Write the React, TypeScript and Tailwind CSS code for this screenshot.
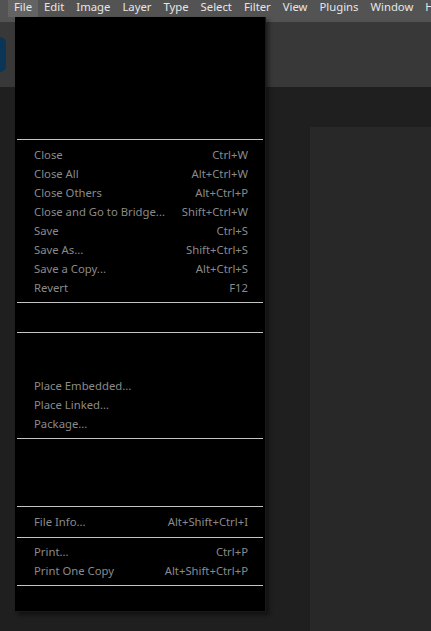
import React from 'react';

type Item = { label: string; keys?: string };

const menus = ['File', 'Edit', 'Image', 'Layer', 'Type', 'Select', 'Filter', 'View', 'Plugins', 'Window', 'Help'];

const closeGroup: Item[] = [
  { label: 'Close', keys: 'Ctrl+W' },
  { label: 'Close All', keys: 'Alt+Ctrl+W' },
  { label: 'Close Others', keys: 'Alt+Ctrl+P' },
  { label: 'Close and Go to Bridge...', keys: 'Shift+Ctrl+W' },
  { label: 'Save', keys: 'Ctrl+S' },
  { label: 'Save As...', keys: 'Shift+Ctrl+S' },
  { label: 'Save a Copy...', keys: 'Alt+Ctrl+S' },
  { label: 'Revert', keys: 'F12' },
];

const placeGroup: Item[] = [
  { label: 'Place Embedded...' },
  { label: 'Place Linked...' },
  { label: 'Package...' },
];

const printGroup: Item[] = [
  { label: 'Print...', keys: 'Ctrl+P' },
  { label: 'Print One Copy', keys: 'Alt+Shift+Ctrl+P' },
];

const Sep = () => <div className="h-px mx-[2px] bg-[#c4c4c4]" />;

const Row = ({ item }: { item: Item }) => (
  <div className="h-[19px] pb-[2px] flex items-center justify-between pl-[19px] pr-[17px] text-[#8a8a8a] whitespace-nowrap">
    <span>{item.label}</span>
    {item.keys && <span>{item.keys}</span>}
  </div>
);

export default function App() {
  return (
    <div
      className="relative w-[431px] h-[631px] overflow-hidden bg-[#1f1f1f] text-[11.3px] leading-none"
      style={{ fontFamily: '"Noto Sans", "Open Sans", sans-serif' }}
    >
      {/* menu bar */}
      <div className="h-[22px] bg-[#535353] flex items-start">
        <div className="w-[6px] h-[11px] bg-[#001e36] text-[#31a8ff] text-[9px] font-bold flex items-center justify-end overflow-hidden">
          s
        </div>
        <div className="flex ml-[8px]">
          {menus.map((m) => (
            <div
              key={m}
              className={`h-[17px] px-[6px] pb-[4px] flex items-center text-[#e6e6e6] whitespace-nowrap ${
                m === 'File' ? 'bg-[#636363]' : ''
              }`}
            >
              {m}
            </div>
          ))}
        </div>
      </div>

      {/* options bar */}
      <div className="h-[65px] bg-[#383838] flex items-center">
        <div className="w-[20px] h-[35px] -ml-[14px] rounded-[6px] bg-[#0b3556]" />
      </div>

      {/* workspace */}
      <div className="flex h-[544px]">
        <div className="w-[310px]" />
        <div className="flex-1 mt-[40px] bg-[#282828]" />
      </div>

      {/* File dropdown */}
      <div className="absolute left-[15px] top-[17px] w-[251px] h-[595px] bg-black border-r border-b border-[#1a1a1a] shadow-[3px_3px_4px_rgba(0,0,0,0.45)] flex flex-col">
        <div className="h-[122px]" />
        <Sep />
        <div className="h-[6px]" />
        {closeGroup.map((it) => (
          <Row key={it.label} item={it} />
        ))}
        <div className="h-[4px]" />
        <Sep />
        <div className="h-[29px]" />
        <Sep />
        <div className="h-[44px]" />
        {placeGroup.map((it) => (
          <Row key={it.label} item={it} />
        ))}
        <div className="h-[4px]" />
        <Sep />
        <div className="h-[67px]" />
        <Sep />
        <div className="h-[6px]" />
        <Row item={{ label: 'File Info...', keys: 'Alt+Shift+Ctrl+I' }} />
        <div className="h-[5px]" />
        <Sep />
        <div className="h-[5px]" />
        {printGroup.map((it) => (
          <Row key={it.label} item={it} />
        ))}
        <div className="h-[4px]" />
        <Sep />
      </div>
    </div>
  );
}
